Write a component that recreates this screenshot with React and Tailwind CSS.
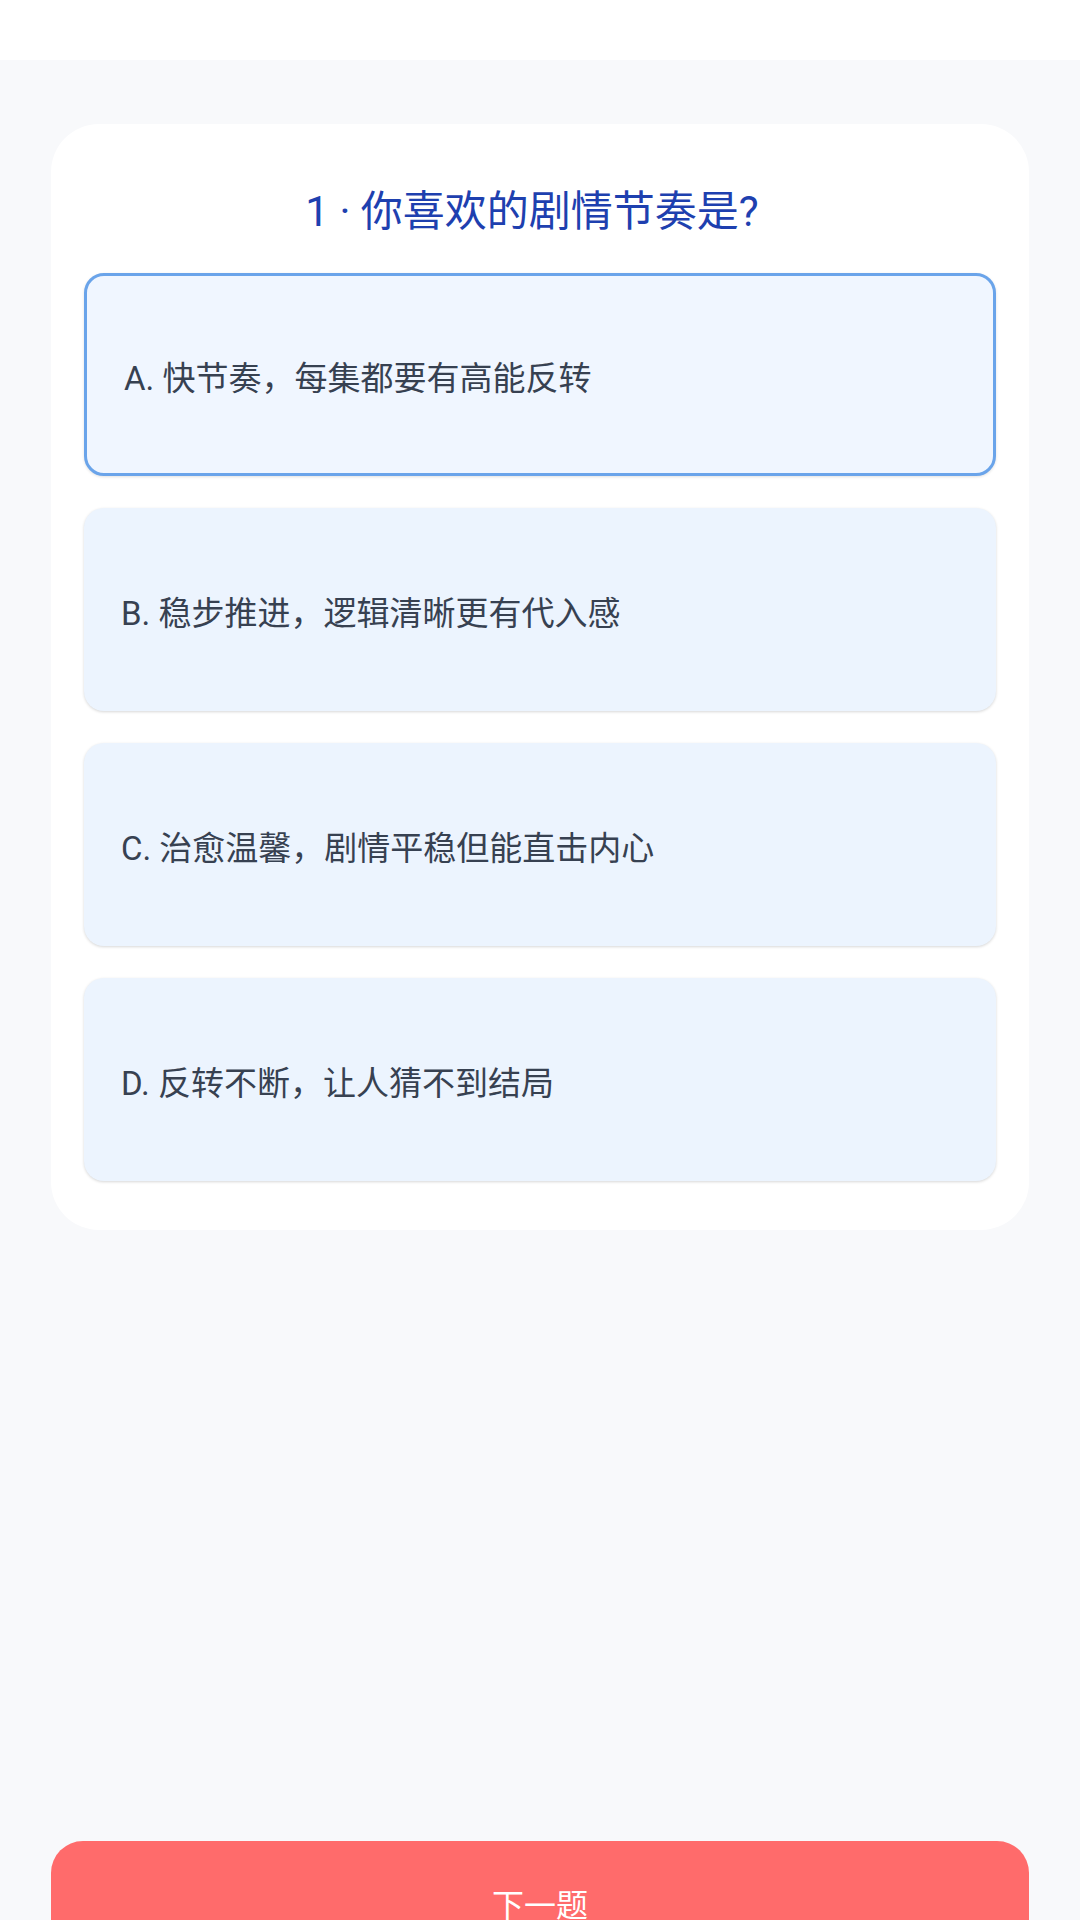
const options = [
  "A. 快节奏，每集都要有高能反转",
  "B. 稳步推进，逻辑清晰更有代入感",
  "C. 治愈温馨，剧情平稳但能直击内心",
  "D. 反转不断，让人猜不到结局",
];

export default function App() {
  const selected = 0;

  return (
    <div
      className="h-[1920px] w-[1080px] overflow-hidden bg-[#f8f9fb]"
      style={{ fontFamily: "Roboto, 'Noto Sans CJK SC', sans-serif" }}
    >
      <div className="h-[60px] bg-white" />

      <div className="px-[51px] pt-[64px]">
        <div className="rounded-[48px] bg-white px-[33px] pt-[58px] pb-[49px]">
          <h1 className="mb-[31px] pr-[16px] text-center text-[42px] leading-[60px] font-normal text-[#1e40af]">
            1 · 你喜欢的剧情节奏是?
          </h1>

          <div className="flex flex-col gap-[32px]">
            {options.map((text, i) => (
              <div
                key={text}
                className={`flex h-[203px] items-center rounded-[20px] px-[37px] pt-[8px] text-[33px] text-[#374151] ${
                  i === selected
                    ? "border-[3px] border-[#6aa4ea] bg-[#f0f6ff] shadow-[0_1px_3px_rgba(0,0,0,0.12)]"
                    : "bg-[#ecf4fe] shadow-[0_1px_3px_rgba(0,0,0,0.16)]"
                }`}
              >
                {text}
              </div>
            ))}
          </div>
        </div>

        <button className="mt-[611px] flex h-[130px] w-full items-center justify-center rounded-[32px] bg-[#ff6b6b] text-[32px] text-white">
          下一题
        </button>
      </div>
    </div>
  );
}
